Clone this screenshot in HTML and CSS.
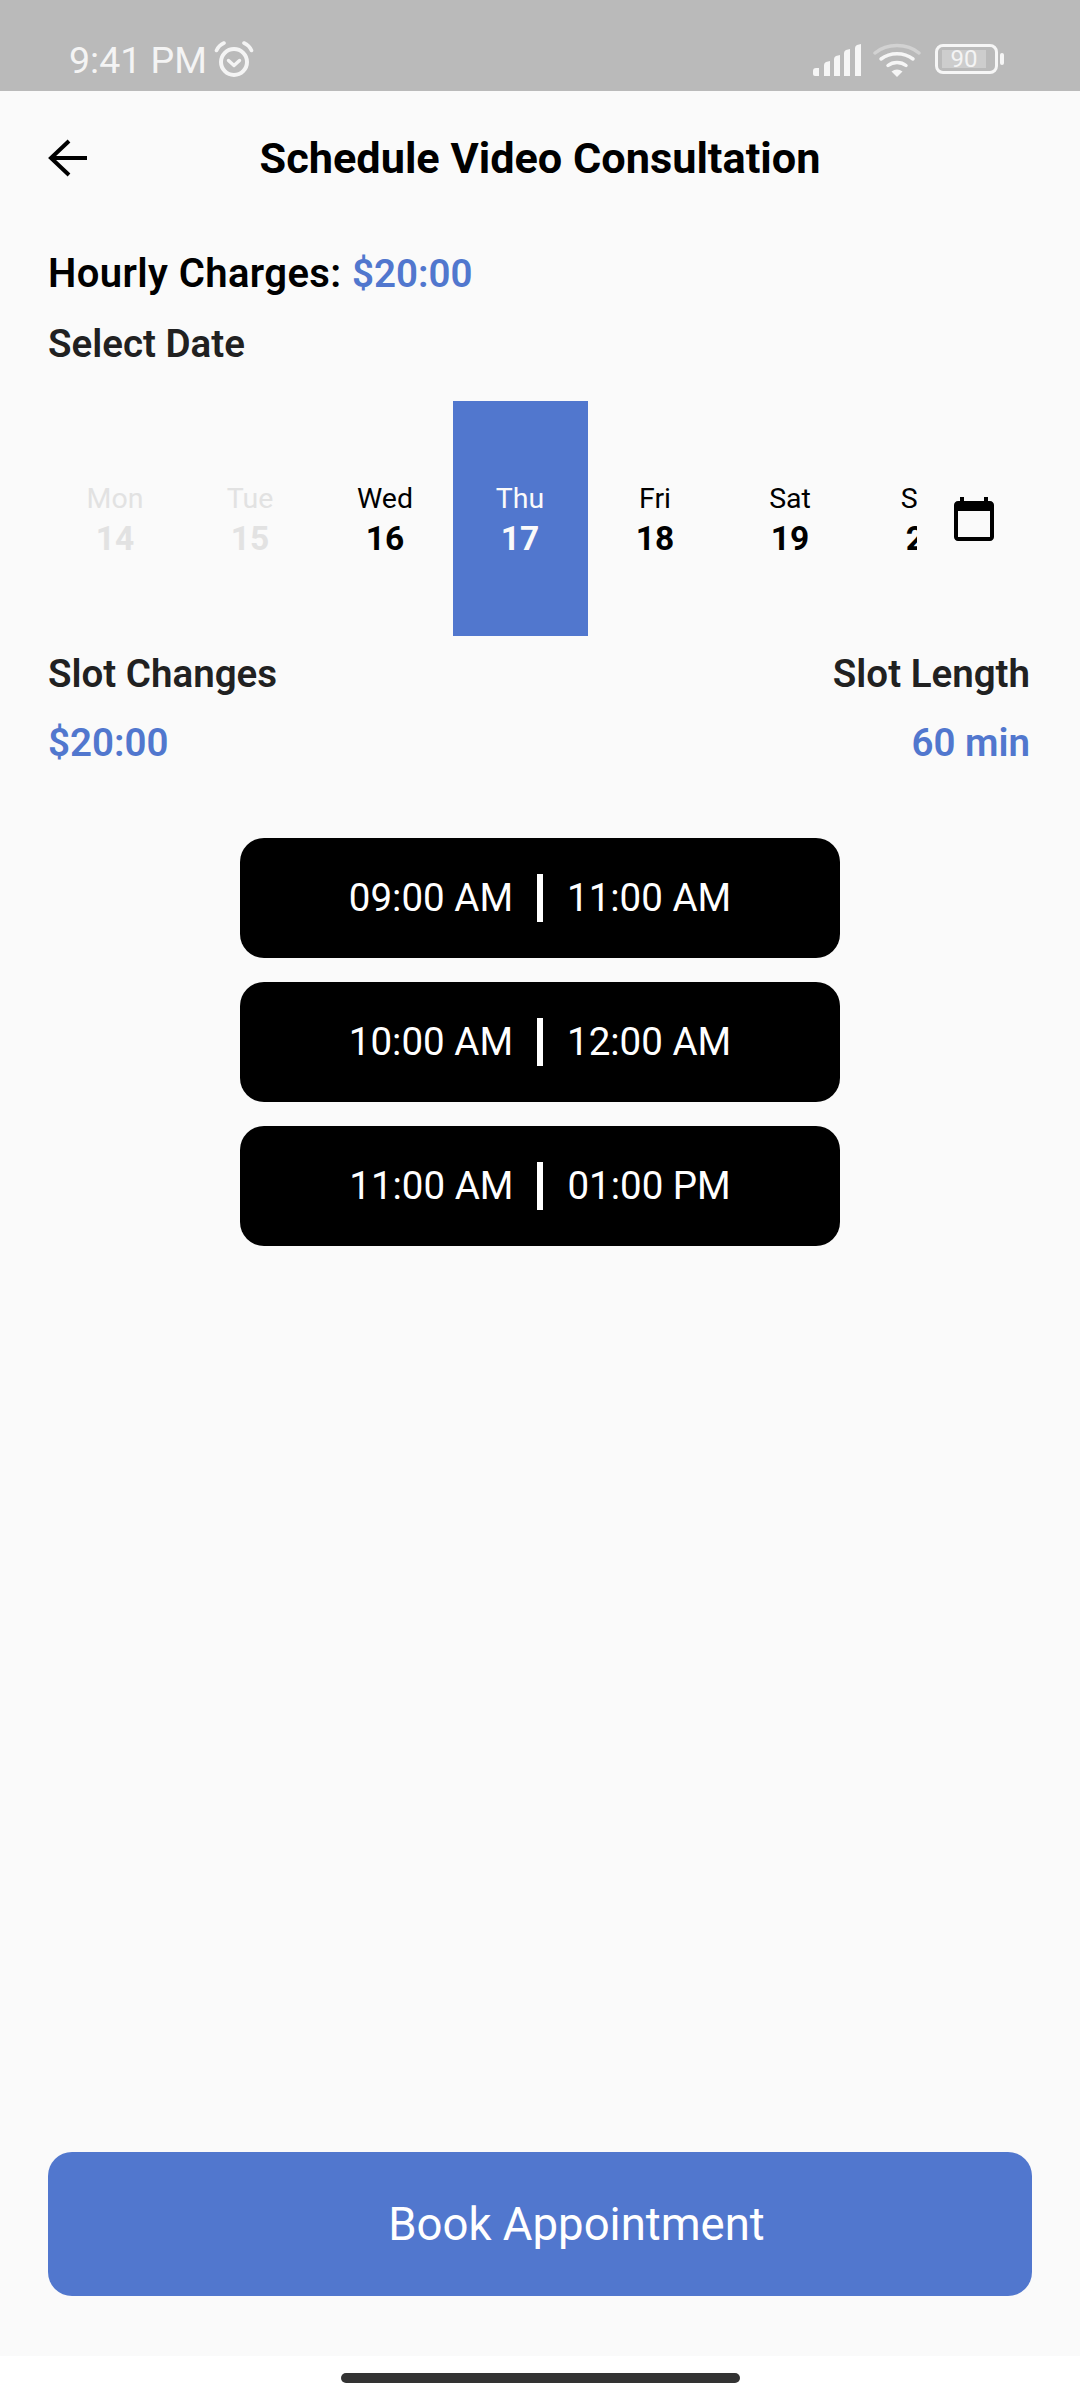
FILE: index.html
```html
<!doctype html>
<html lang="en">
<head>
	<meta charset="utf-8">
	<title>Schedule Video Consultation</title>
	<meta name="viewport" content="width=device-width, initial-scale=1">
	<link rel="stylesheet" href="styles.css">
</head>
<body>
	<div class="app">
		<div class="status-bar">
			<div class="status-left">
				<span class="clock">9:41 PM</span>
				<svg class="alarm" viewBox="0 0 40 36" fill="none" stroke="#f4f4f4">
					<circle cx="20" cy="21" r="13" stroke-width="4"/>
					<path d="M14.500 19.500l5.500 5 5.500-5" stroke-width="3.400" stroke-linecap="round" stroke-linejoin="round"/>
					<path d="M2.500 9.500C4 6 6.500 3.500 10 2" stroke-width="3.600" stroke-linecap="round"/>
					<path d="M37.500 9.500C36 6 33.500 3.500 30 2" stroke-width="3.600" stroke-linecap="round"/>
				</svg>
			</div>
			<div class="status-right">
				<svg class="signal" viewBox="0 0 48 32" fill="#f6f6f6">
					<path d="M0 27q0-3 3-3h3v8H2q-2 0-2-2z"/>
					<path d="M11 21q0-2 2-3l4-1v15h-6z"/>
					<path d="M21 15q0-2 2-3l4-1v21h-6z"/>
					<path d="M31 9q0-2 2-3l4-1v27h-6z"/>
					<path d="M42 4q0-2 2-3l4-1v32h-6z"/>
				</svg>
				<svg class="wifi" viewBox="0 0 48 34" fill="none" stroke-linecap="round">
					<path d="M2 10C14 0 34 0 46 10" stroke="#d2d2d2" stroke-width="3.500"/>
					<path d="M8 16C17 9 31 9 40 16" stroke="#f6f6f6" stroke-width="3.500"/>
					<path d="M15 22.500C20 18.500 28 18.500 33 22.500" stroke="#f6f6f6" stroke-width="3.500"/>
					<path d="M24 34l-5.500-5.500q5.500-4 11 0z" fill="#f6f6f6"/>
				</svg>
				<div class="battery">
					<div class="battery-body"><span class="battery-level">90</span></div>
					<div class="battery-tip"></div>
				</div>
			</div>
		</div>

		<div class="screen">
			<div class="top-bar">
				<svg class="back" viewBox="0 0 40 38" fill="none" stroke="#000" stroke-width="4">
					<path d="M39 19H3"/>
					<path d="M21 2L3 19l18 17"/>
				</svg>
				<h1 class="title">Schedule Video Consultation</h1>
			</div>

			<div class="content">
				<p class="hourly">Hourly Charges: <span class="accent">$20:00</span></p>
				<p class="label select-date">Select Date</p>
			</div>

			<div class="date-row">
				<div class="days">
					<div class="day past"><span class="day-name">Mon</span><span class="day-num">14</span></div>
					<div class="day past"><span class="day-name">Tue</span><span class="day-num">15</span></div>
					<div class="day"><span class="day-name">Wed</span><span class="day-num">16</span></div>
					<div class="day selected"><span class="day-name">Thu</span><span class="day-num">17</span></div>
					<div class="day"><span class="day-name">Fri</span><span class="day-num">18</span></div>
					<div class="day"><span class="day-name">Sat</span><span class="day-num">19</span></div>
					<div class="day"><span class="day-name">Sun</span><span class="day-num">20</span></div>
				</div>
				<svg class="calendar" viewBox="0 0 24 24" fill="#000">
					<path d="M20 3h-1V1h-2v2H7V1H5v2H4c-1.100 0-2 .9-2 2v16c0 1.100.9 2 2 2h16c1.100 0 2-.9 2-2V5c0-1.100-.9-2-2-2zm0 18H4V8h16v13z"/>
				</svg>
			</div>

			<div class="slot-info">
				<div class="info-col">
					<p class="label">Slot Changes</p>
					<p class="value">$20:00</p>
				</div>
				<div class="info-col right">
					<p class="label">Slot Length</p>
					<p class="value">60 min</p>
				</div>
			</div>

			<div class="slots">
				<div class="slot"><span>09:00 AM</span><i class="slot-line"></i><span>11:00 AM</span></div>
				<div class="slot"><span>10:00 AM</span><i class="slot-line"></i><span>12:00 AM</span></div>
				<div class="slot"><span>11:00 AM</span><i class="slot-line"></i><span>01:00 PM</span></div>
			</div>

			<button class="book">Book Appointment</button>
		</div>

		<div class="nav-bar"><div class="home-pill"></div></div>
	</div>
</body>
</html>
```

FILE: styles.css
```css
* {
	box-sizing: border-box;
}

body {
	margin: 0;
	background: #fafafa;
	font-family: Roboto, sans-serif;
}

p, h1 {
	margin: 0;
}

.app {
	display: flex;
	flex-direction: column;
	width: 1080px;
	height: 2400px;
	overflow: hidden;
}

/* status bar */
.status-bar {
	display: flex;
	justify-content: space-between;
	flex-shrink: 0;
	height: 91px;
	padding: 41px 76px 0 69px;
	background: #bababa;
	color: #f4f4f4;
}

.status-left {
	display: flex;
	align-items: flex-start;
	gap: 7px;
}

.clock {
	font-size: 37.500px;
	line-height: 38px;
}

.alarm {
	width: 40px;
	height: 36px;
}

.status-right {
	display: flex;
	align-items: flex-start;
}

.signal {
	width: 48px;
	height: 32px;
	margin-top: 3px;
}

.wifi {
	width: 48px;
	height: 34px;
	margin: 2px 14px 0 12px;
}

.battery {
	display: flex;
	align-items: center;
	margin-top: 3px;
}

.battery-body {
	display: flex;
	align-items: center;
	width: 63px;
	height: 30px;
	padding: 3px;
	border: 3px solid #f6f6f6;
	border-radius: 8px;
}

.battery-level {
	width: 44px;
	height: 18px;
	margin-left: 1px;
	background: #cdcdcd;
	font-size: 24px;
	line-height: 18px;
	text-align: center;
	color: #f4f4f4;
}

.battery-tip {
	width: 4px;
	height: 12px;
	margin-left: 2px;
	background: #f6f6f6;
	border-radius: 2px;
}

/* top */
.screen {
	display: flex;
	flex-direction: column;
	flex: 1;
}

.top-bar {
	display: grid;
	grid-template-columns: 1fr auto 1fr;
	align-items: center;
	height: 60px;
	margin-top: 38px;
	padding: 0 48px;
}

.back {
	width: 40px;
	height: 38px;
	margin-top: -2px;
}

.title {
	font-size: 43.250px;
	line-height: 60px;
	font-weight: 700;
	color: #000;
}

.content {
	margin-top: 62px;
	padding: 0 48px;
}

.hourly {
	font-size: 40px;
	line-height: 46px;
	font-weight: 600;
	letter-spacing: 0.4px;
	color: #000;
}

.accent {
	color: #5177ce;
	font-size: 38.500px;
	letter-spacing: 0;
}

.label {
	font-size: 38.500px;
	line-height: 46px;
	font-weight: 600;
	color: #212121;
}

.select-date {
	margin-top: 24px;
}

/* dates */
.date-row {
	display: flex;
	align-items: center;
	margin-top: 34px;
	padding-left: 48px;
}

.days {
	display: flex;
	width: 869px;
	overflow: hidden;
}

.day {
	display: flex;
	flex-direction: column;
	align-items: center;
	justify-content: center;
	flex-shrink: 0;
	width: 135px;
	height: 235px;
	padding-top: 2px;
	padding-right: 1px;
	color: #000;
}

.day-name {
	font-size: 28.500px;
	line-height: 38px;
}

.day-num {
	font-size: 33.500px;
	line-height: 42px;
	font-weight: 700;
}

.past {
	color: #e2e2e2;
}

.selected {
	background: #5177ce;
	color: #fafafa;
}

.calendar {
	width: 48px;
	height: 48px;
	margin-left: 33px;
}

/* slots */
.slot-info {
	display: flex;
	justify-content: space-between;
	margin-top: 15px;
	padding: 0 50px 0 48px;
}

.right {
	text-align: right;
}

.value {
	margin-top: 23px;
	font-size: 38.500px;
	line-height: 46px;
	font-weight: 600;
	color: #5177ce;
}

.slots {
	display: flex;
	flex-direction: column;
	align-items: center;
	gap: 24px;
	margin-top: 72px;
}

.slot {
	display: flex;
	align-items: center;
	justify-content: center;
	gap: 24px;
	width: 600px;
	height: 120px;
	background: #000;
	border-radius: 24px;
	color: #fff;
	font-size: 38.500px;
	line-height: 44px;
}

.slot span {
	margin-top: -1px;
}

.slot-line {
	width: 6px;
	height: 48px;
	background: #fff;
}

.book {
	display: block;
	height: 144px;
	margin: auto 48px 60px 48px;
	padding: 0 0 0 73px;
	border: 0;
	background: #5177ce;
	border-radius: 24px;
	color: #fff;
	font-family: Roboto, sans-serif;
	font-size: 45.500px;
}

.nav-bar {
	display: flex;
	justify-content: center;
	flex-shrink: 0;
	height: 44px;
	padding-top: 17px;
	background: #fff;
}

.home-pill {
	width: 399px;
	height: 10px;
	background: #333;
	border-radius: 5px;
}
```
